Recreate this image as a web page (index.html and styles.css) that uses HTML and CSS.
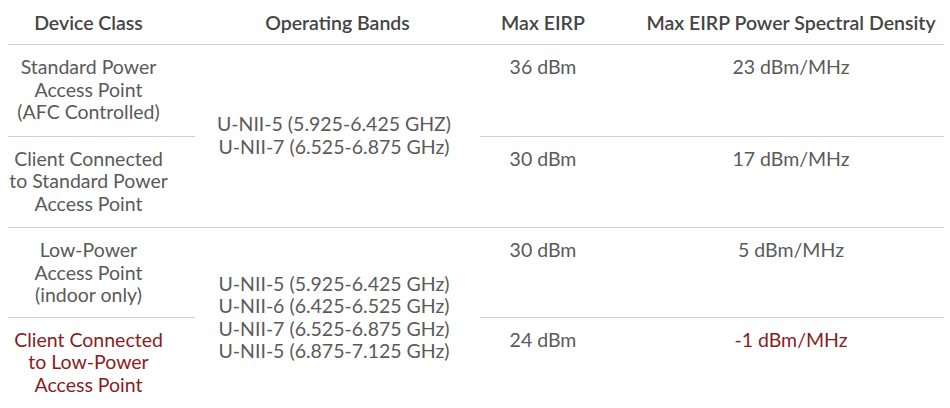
FILE: index.html
```html
<!DOCTYPE html>
<html lang="en">
<head>
<meta charset="utf-8">
<title>6 GHz Device Classes</title>
<link rel="stylesheet" href="styles.css">
</head>
<body>
<table class="spec">
  <colgroup>
    <col class="c1"><col class="c2"><col class="c3"><col class="c4">
  </colgroup>
  <thead>
    <tr>
      <th class="dev">Device Class</th>
      <th class="bands">Operating Bands</th>
      <th>Max EIRP</th>
      <th class="psd">Max EIRP Power Spectral Density</th>
    </tr>
  </thead>
  <tbody>
    <tr>
      <td class="dev">Standard Power<br>Access Point<br>(AFC Controlled)</td>
      <td class="bands" rowspan="2">U-NII-5 (5.925-6.425 GHZ)<br>U-NII-7 (6.525-6.875 GHz)</td>
      <td>36 dBm</td>
      <td class="psd">23 dBm/MHz</td>
    </tr>
    <tr>
      <td class="dev">Client Connected<br>to Standard Power<br>Access Point</td>
      <td>30 dBm</td>
      <td class="psd">17 dBm/MHz</td>
    </tr>
    <tr class="group">
      <td class="dev">Low-Power<br>Access Point<br>(indoor only)</td>
      <td class="bands" rowspan="2">U-NII-5 (5.925-6.425 GHz)<br>U-NII-6 (6.425-6.525 GHz)<br>U-NII-7 (6.525-6.875 GHz)<br>U-NII-5 (6.875-7.125 GHz)</td>
      <td>30 dBm</td>
      <td class="psd">5 dBm/MHz</td>
    </tr>
    <tr>
      <td class="dev hl">Client Connected<br>to Low-Power<br>Access Point</td>
      <td>24 dBm</td>
      <td class="psd hl">-1 dBm/MHz</td>
    </tr>
  </tbody>
</table>
</body>
</html>
```

FILE: styles.css
```css
html, body {
  margin: 0;
  padding: 0;
  background: #ffffff;
}

body {
  padding: 0 6px 0 8px;
  font-family: Lato, "Noto Sans", sans-serif;
  color: #5a5a5a;
}

.spec {
  width: 936px;
  border-collapse: collapse;
  table-layout: fixed;
}

.c1 { width: 187px; }
.c2 { width: 285px; }
.c3 { width: 126px; }
.c4 { width: 338px; }

.spec th {
  height: 44px;
  padding: 0;
  font-size: 19.5px;
  font-weight: 600;
  color: #454545;
  text-align: center;
  vertical-align: middle;
  border-bottom: 1px solid #d0d0d0;
}

.spec td {
  padding: 11px 0 12px;
  font-size: 19.5px;
  line-height: 22.5px;
  text-align: center;
  vertical-align: top;
  border-top: 1px solid #d0d0d0;
}

.spec tr.group td {
  padding-bottom: 10px;
}

.spec .dev {
  padding-right: 26px;
}

.spec td.bands {
  vertical-align: middle;
  border-top: none;
  padding-right: 7px;
}

.spec tr.group td.bands {
  border-top: 1px solid #d0d0d0;
  padding-bottom: 12px;
}

.spec tbody tr:first-child td {
  border-top: none;
}

.spec .psd {
  padding-left: 32px;
}

.spec .hl {
  color: #8a1c22;
}
```
